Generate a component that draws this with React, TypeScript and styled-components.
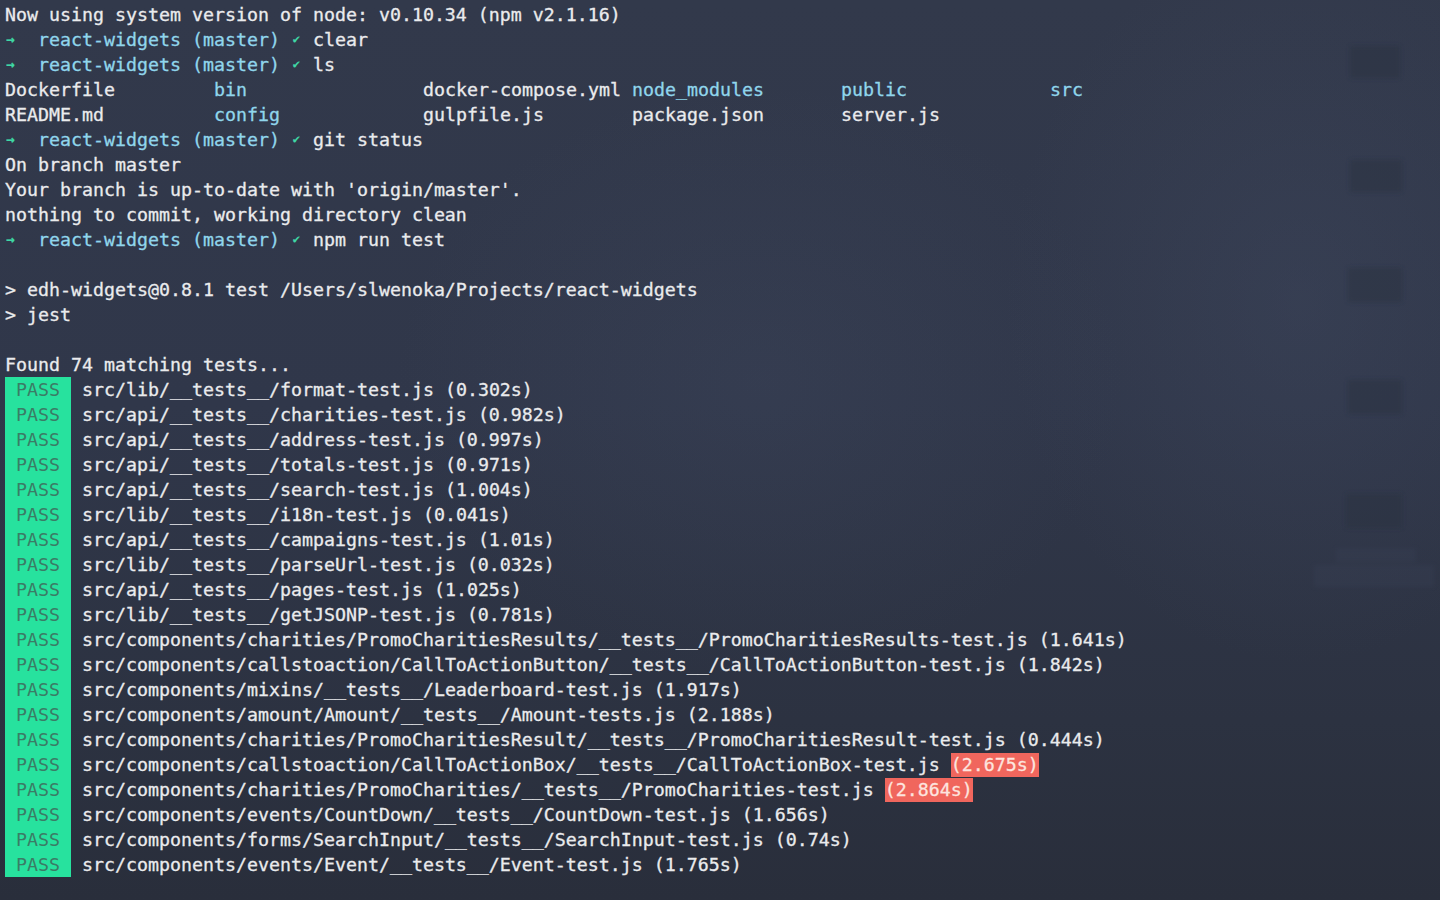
import React from "react";
import styled, { createGlobalStyle } from "styled-components";

const Global = createGlobalStyle`
  html, body { margin: 0; padding: 0; }
  body {
    width: 1440px;
    height: 900px;
    overflow: hidden;
    background: #30364a;
  }
`;

const Screen = styled.div`
  position: relative;
  width: 1440px;
  height: 900px;
  overflow: hidden;
  background:
    radial-gradient(ellipse 520px 420px at 760px 380px, rgba(70, 80, 104, 0.22), transparent 70%),
    radial-gradient(ellipse 420px 520px at 1300px 300px, rgba(70, 80, 104, 0.28), transparent 70%),
    linear-gradient(180deg, #32394b 0%, #30374a 45%, #2c3241 80%, #292e3b 100%);
`;

const Backdrop = styled.svg`
  position: absolute;
  inset: 0;
  pointer-events: none;
`;

const Terminal = styled.div`
  position: relative;
  padding: 2px 0 0 5px;
  font-family: "DejaVu Sans Mono", "Liberation Mono", monospace;
  font-size: 18.27px;
  color: #eaebed;
  -webkit-text-stroke: 0.3px currentColor;
  display: flex;
  flex-direction: column;
`;

const Line = styled.div`
  height: 25px;
  line-height: 25px;
  white-space: pre;
`;

const Glyph = styled.span<{ $size: number }>`
  display: inline-block;
  width: 11px;
  text-align: center;
  color: #3fd8a6;
  font-size: ${(p) => p.$size}px;
  font-weight: bold;
  vertical-align: top;
`;

const Cyan = styled.span`
  color: #90d6ec;
`;

const Badge = styled.span`
  display: inline-block;
  height: 25px;
  line-height: 25px;
  vertical-align: top;
  background: #27e29e;
  color: #3b7c66;
  -webkit-text-stroke: 0;
`;

const Slow = styled.span`
  display: inline-block;
  height: 24px;
  line-height: 24px;
  vertical-align: top;
  margin-top: 1px;
  background: #f0665d;
  color: #fde4df;
`;

const Col = styled.span<{ $w: number }>`
  display: inline-block;
  width: ${(p) => p.$w * 11}px;
`;

const Prompt = ({ cmd }: { cmd: string }) => (
  <Line>
    <Glyph $size={14}>{"\u2192"}</Glyph>
    {"  "}
    <Cyan>react-widgets (master)</Cyan> <Glyph $size={12}>{"\u2714"}</Glyph>
    {" " + cmd}
  </Line>
);

const tests: [string, string, boolean?][] = [
  ["src/lib/__tests__/format-test.js", "0.302s"],
  ["src/api/__tests__/charities-test.js", "0.982s"],
  ["src/api/__tests__/address-test.js", "0.997s"],
  ["src/api/__tests__/totals-test.js", "0.971s"],
  ["src/api/__tests__/search-test.js", "1.004s"],
  ["src/lib/__tests__/i18n-test.js", "0.041s"],
  ["src/api/__tests__/campaigns-test.js", "1.01s"],
  ["src/lib/__tests__/parseUrl-test.js", "0.032s"],
  ["src/api/__tests__/pages-test.js", "1.025s"],
  ["src/lib/__tests__/getJSONP-test.js", "0.781s"],
  ["src/components/charities/PromoCharitiesResults/__tests__/PromoCharitiesResults-test.js", "1.641s"],
  ["src/components/callstoaction/CallToActionButton/__tests__/CallToActionButton-test.js", "1.842s"],
  ["src/components/mixins/__tests__/Leaderboard-test.js", "1.917s"],
  ["src/components/amount/Amount/__tests__/Amount-tests.js", "2.188s"],
  ["src/components/charities/PromoCharitiesResult/__tests__/PromoCharitiesResult-test.js", "0.444s"],
  ["src/components/callstoaction/CallToActionBox/__tests__/CallToActionBox-test.js", "2.675s", true],
  ["src/components/charities/PromoCharities/__tests__/PromoCharities-test.js", "2.864s", true],
  ["src/components/events/CountDown/__tests__/CountDown-test.js", "1.656s"],
  ["src/components/forms/SearchInput/__tests__/SearchInput-test.js", "0.74s"],
  ["src/components/events/Event/__tests__/Event-test.js", "1.765s"],
];

const ls: [string, boolean][][] = [
  [["Dockerfile", false], ["bin", true], ["docker-compose.yml", false], ["node_modules", true], ["public", true], ["src", true]],
  [["README.md", false], ["config", true], ["gulpfile.js", false], ["package.json", false], ["server.js", false]],
];

export default function App() {
  return (
    <>
      <Global />
      <Screen>
        <Backdrop width="1440" height="900" viewBox="0 0 1440 900">
          <defs>
            <filter id="blur" x="-20%" y="-20%" width="140%" height="140%">
              <feGaussianBlur stdDeviation="2" />
            </filter>
          </defs>
          <g filter="url(#blur)" fill="#2a3040" opacity="0.45">
            <rect x="1350" y="46" width="50" height="32" />
            <rect x="1350" y="160" width="52" height="32" />
            <rect x="1348" y="268" width="54" height="34" />
            <rect x="1348" y="380" width="54" height="34" />
            <rect x="1346" y="494" width="56" height="34" />
          </g>
          <g filter="url(#blur)" fill="#3a4256" opacity="0.3">
            <rect x="1314" y="565" width="120" height="22" />
            <rect x="1336" y="548" width="80" height="14" />
          </g>
        </Backdrop>
        <Terminal>
          <Line>Now using system version of node: v0.10.34 (npm v2.1.16)</Line>
          <Prompt cmd="clear" />
          <Prompt cmd="ls" />
          {ls.map((row, i) => (
            <Line key={i}>
              {row.map(([name, dir], j) => (
                <Col key={j} $w={19}>
                  {dir ? <Cyan>{name}</Cyan> : name}
                </Col>
              ))}
            </Line>
          ))}
          <Prompt cmd="git status" />
          <Line>On branch master</Line>
          <Line>Your branch is up-to-date with 'origin/master'.</Line>
          <Line>nothing to commit, working directory clean</Line>
          <Prompt cmd="npm run test" />
          <Line> </Line>
          <Line>{"> edh-widgets@0.8.1 test /Users/slwenoka/Projects/react-widgets"}</Line>
          <Line>{"> jest"}</Line>
          <Line> </Line>
          <Line>Found 74 matching tests...</Line>
          {tests.map(([path, time, slow]) => (
            <Line key={path}>
              <Badge>{" PASS "}</Badge>
              {" " + path + " "}
              {slow ? <Slow>({time})</Slow> : `(${time})`}
            </Line>
          ))}
        </Terminal>
      </Screen>
    </>
  );
}
